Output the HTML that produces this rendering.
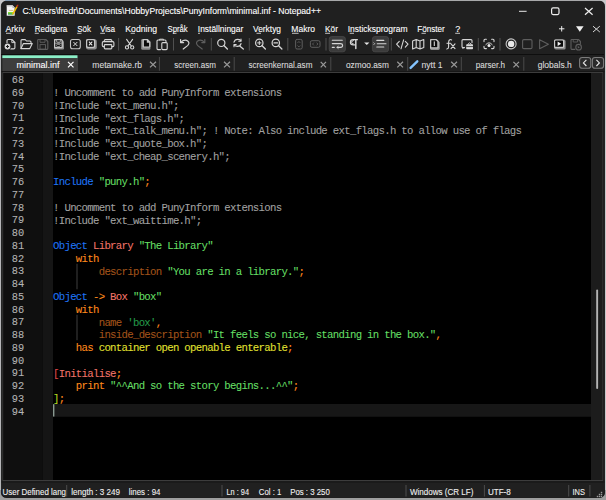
<!DOCTYPE html>
<html><head><meta charset="utf-8"><title>Notepad++</title>
<style>html,body{margin:0;padding:0;width:606px;height:500px;overflow:hidden;background:#d9dde3;font-family:"Liberation Sans",sans-serif}svg{display:block}</style>
</head><body>
<svg width="606" height="500" viewBox="0 0 606 500" shape-rendering="auto"><rect x="0" y="0" width="606" height="500" fill="#c6c7c9"/>
<rect x="0" y="490" width="606" height="10" fill="#9e9e9e"/>
<rect x="5" y="0" width="11" height="1.3" fill="#9db4cc"/>
<rect x="1.4" y="1.3" width="603.1" height="496.2" rx="4.5" ry="4.5" fill="#202020" stroke="#0e0e0e" stroke-width="0.8"/>
<g><path d="M6.7 5.2 H12.6 L14.7 7.6 V15.8 H6.7 Z" fill="#f6f6f6"/><rect x="6.7" y="5.2" width="6" height="1.3" fill="#c8c8c8"/><path d="M12.4 5.2 V8 H14.7" fill="#b8b8b8"/><rect x="8.8" y="9.9" width="4.4" height="1.1" fill="#d8c890"/><rect x="8" y="12" width="5.6" height="1.3" fill="#88e030"/><rect x="8" y="13.3" width="5.6" height="1.3" fill="#259a25"/><path d="M11.8 14.8 L12.4 13.2 L16.2 6.2 L17.6 7 L13.8 14 Z" fill="#f2b800"/><path d="M16.2 6.2 L16.9 5 L18.2 4.5 L18.3 5.9 L17.6 7 Z" fill="#c83018"/></g>
<text x="22.4" y="14.4" font-family="Liberation Sans" font-size="9.6" fill="#ffffff" textLength="298.6" lengthAdjust="spacingAndGlyphs" stroke="#ffffff" stroke-width="0.12">C:\Users\fredr\Documents\HobbyProjects\PunyInform\minimal.inf - Notepad++</text>
<rect x="519" y="10.8" width="7.6" height="1" fill="#e8e8e8"/>
<rect x="551.6" y="7.9" width="7.4" height="6.7" rx="1.5" fill="none" stroke="#eeeeee" stroke-width="1.2"/>
<path d="M585 8 L592.6 14.8 M592.6 8 L585 14.8" stroke="#eeeeee" stroke-width="1.2"/>
<text x="5.4" y="31.9" font-family="Liberation Sans" font-size="9" fill="#ffffff" textLength="19.4" lengthAdjust="spacingAndGlyphs" stroke="#ffffff" stroke-width="0.1">Arkiv</text>
<text x="34.7" y="31.9" font-family="Liberation Sans" font-size="9" fill="#ffffff" textLength="32.6" lengthAdjust="spacingAndGlyphs" stroke="#ffffff" stroke-width="0.1">Redigera</text>
<text x="77.2" y="31.9" font-family="Liberation Sans" font-size="9" fill="#ffffff" textLength="13.8" lengthAdjust="spacingAndGlyphs" stroke="#ffffff" stroke-width="0.1">Sök</text>
<text x="100.2" y="31.9" font-family="Liberation Sans" font-size="9" fill="#ffffff" textLength="14.8" lengthAdjust="spacingAndGlyphs" stroke="#ffffff" stroke-width="0.1">Visa</text>
<text x="125.3" y="31.9" font-family="Liberation Sans" font-size="9" fill="#ffffff" textLength="31.8" lengthAdjust="spacingAndGlyphs" stroke="#ffffff" stroke-width="0.1">Kodning</text>
<text x="167.5" y="31.9" font-family="Liberation Sans" font-size="9" fill="#ffffff" textLength="20.2" lengthAdjust="spacingAndGlyphs" stroke="#ffffff" stroke-width="0.1">Språk</text>
<text x="197.8" y="31.9" font-family="Liberation Sans" font-size="9" fill="#ffffff" textLength="45.5" lengthAdjust="spacingAndGlyphs" stroke="#ffffff" stroke-width="0.1">Inställningar</text>
<text x="253" y="31.9" font-family="Liberation Sans" font-size="9" fill="#ffffff" textLength="28" lengthAdjust="spacingAndGlyphs" stroke="#ffffff" stroke-width="0.1">Verktyg</text>
<text x="291.3" y="31.9" font-family="Liberation Sans" font-size="9" fill="#ffffff" textLength="23.7" lengthAdjust="spacingAndGlyphs" stroke="#ffffff" stroke-width="0.1">Makro</text>
<text x="325.1" y="31.9" font-family="Liberation Sans" font-size="9" fill="#ffffff" textLength="12.8" lengthAdjust="spacingAndGlyphs" stroke="#ffffff" stroke-width="0.1">Kör</text>
<text x="347.7" y="31.9" font-family="Liberation Sans" font-size="9" fill="#ffffff" textLength="60.0" lengthAdjust="spacingAndGlyphs" stroke="#ffffff" stroke-width="0.1">Insticksprogram</text>
<text x="417.2" y="31.9" font-family="Liberation Sans" font-size="9" fill="#ffffff" textLength="27.6" lengthAdjust="spacingAndGlyphs" stroke="#ffffff" stroke-width="0.1">Fönster</text>
<text x="455.2" y="31.9" font-family="Liberation Sans" font-size="9" fill="#ffffff" textLength="5.0" lengthAdjust="spacingAndGlyphs" stroke="#ffffff" stroke-width="0.1">?</text>
<rect x="6" y="32.8" width="5.3" height="0.9" fill="#d8d8d8"/>
<rect x="34.7" y="32.8" width="4.1" height="0.9" fill="#d8d8d8"/>
<rect x="77.2" y="32.8" width="4.3" height="0.9" fill="#d8d8d8"/>
<rect x="100.2" y="32.8" width="4.8" height="0.9" fill="#d8d8d8"/>
<rect x="130.7" y="32.8" width="4.2" height="0.9" fill="#d8d8d8"/>
<rect x="172.8" y="32.8" width="3.7" height="0.9" fill="#d8d8d8"/>
<rect x="198" y="32.8" width="2" height="0.9" fill="#d8d8d8"/>
<rect x="256.5" y="32.8" width="4.5" height="0.9" fill="#d8d8d8"/>
<rect x="292" y="32.8" width="6.6" height="0.9" fill="#d8d8d8"/>
<rect x="325.1" y="32.8" width="4.9" height="0.9" fill="#d8d8d8"/>
<rect x="349.7" y="32.8" width="4.3" height="0.9" fill="#d8d8d8"/>
<rect x="421.5" y="32.8" width="4.3" height="0.9" fill="#d8d8d8"/>
<rect x="455.2" y="32.8" width="4.8" height="0.9" fill="#d8d8d8"/>
<path d="M559 28.8 H564.4 M561.7 26.1 V31.5" stroke="#f0f0f0" stroke-width="1"/>
<path d="M576 26.3 H583.6 L579.8 31.8 Z" fill="#f0f0f0"/>
<path d="M593 26.2 L599.8 32 M599.8 26.2 L593 32" stroke="#d8d8d8" stroke-width="1"/>
<rect x="1" y="54" width="603" height="1" fill="#0e0e0e"/>
<rect x="2.3" y="55.3" width="75.2" height="3" fill="#8cf0c8"/>
<rect x="2.3" y="58.3" width="75.2" height="12.7" fill="#3d3d3d"/>
<rect x="76.8" y="58.3" width="0.8" height="12.7" fill="#4c4c4c"/>
<rect x="1.5" y="71" width="603" height="1" fill="#161616"/>
<text x="16.5" y="68.45" font-family="Liberation Sans" font-size="9" fill="#ffffff" textLength="43.0" lengthAdjust="spacingAndGlyphs" stroke="#ffffff" stroke-width="0.1">minimal.inf</text>
<path d="M68 61.8 L73.5 67.4 M73.5 61.8 L68 67.4" stroke="#ffffff" stroke-width="1.2"/>
<text x="92.3" y="68.45" font-family="Liberation Sans" font-size="9" fill="#dadada" textLength="49.7" lengthAdjust="spacingAndGlyphs" stroke="#dadada" stroke-width="0.1">metamake.rb</text>
<path d="M150 61.8 L156 67.4 M156 61.8 L150 67.4" stroke="#9a9a9a" stroke-width="1.2"/>
<rect x="158.9" y="57" width="1" height="13.7" fill="#4a4a4a"/>
<text x="174.3" y="68.45" font-family="Liberation Sans" font-size="9" fill="#dadada" textLength="41.6" lengthAdjust="spacingAndGlyphs" stroke="#dadada" stroke-width="0.1">screen.asm</text>
<path d="M224 61.8 L230 67.4 M230 61.8 L224 67.4" stroke="#9a9a9a" stroke-width="1.2"/>
<rect x="233.7" y="57" width="1" height="13.7" fill="#4a4a4a"/>
<text x="248.5" y="68.45" font-family="Liberation Sans" font-size="9" fill="#dadada" textLength="63.9" lengthAdjust="spacingAndGlyphs" stroke="#dadada" stroke-width="0.1">screenkernal.asm</text>
<path d="M320.7 61.8 L326 67.4 M326 61.8 L320.7 67.4" stroke="#9a9a9a" stroke-width="1.2"/>
<rect x="330.3" y="57" width="1" height="13.7" fill="#4a4a4a"/>
<text x="346" y="68.45" font-family="Liberation Sans" font-size="9" fill="#dadada" textLength="42.9" lengthAdjust="spacingAndGlyphs" stroke="#dadada" stroke-width="0.1">ozmoo.asm</text>
<path d="M397.3 61.8 L403 67.4 M403 61.8 L397.3 67.4" stroke="#9a9a9a" stroke-width="1.2"/>
<rect x="407.2" y="57" width="1" height="13.7" fill="#4a4a4a"/>
<text x="421.5" y="68.45" font-family="Liberation Sans" font-size="9" fill="#dadada" textLength="21.1" lengthAdjust="spacingAndGlyphs" stroke="#dadada" stroke-width="0.1">nytt 1</text>
<path d="M451.2 61.8 L457 67.4 M457 61.8 L451.2 67.4" stroke="#9a9a9a" stroke-width="1.2"/>
<rect x="460.8" y="57" width="1" height="13.7" fill="#4a4a4a"/>
<text x="475.8" y="68.45" font-family="Liberation Sans" font-size="9" fill="#dadada" textLength="29.2" lengthAdjust="spacingAndGlyphs" stroke="#dadada" stroke-width="0.1">parser.h</text>
<path d="M513.4 61.8 L519 67.4 M519 61.8 L513.4 67.4" stroke="#9a9a9a" stroke-width="1.2"/>
<rect x="523.3" y="57" width="1" height="13.7" fill="#4a4a4a"/>
<text x="537.7" y="68.45" font-family="Liberation Sans" font-size="9" fill="#dadada" textLength="34.1" lengthAdjust="spacingAndGlyphs" stroke="#dadada" stroke-width="0.1">globals.h</text>
<path d="M410.6 67.9 L417.3 61.3" stroke="#84c4ff" stroke-width="2.4" stroke-linecap="round"/>
<rect x="579.6" y="57.5" width="11.2" height="10.8" rx="2.6" fill="#2b2b2b" stroke="#7c7c7c" stroke-width="1.1"/>
<rect x="592.4" y="57.5" width="11.2" height="10.8" rx="2.6" fill="#2b2b2b" stroke="#7c7c7c" stroke-width="1.1"/>
<path d="M586.4 59.8 L583.4 62.9 L586.4 66" fill="none" stroke="#e8e8e8" stroke-width="1.1"/>
<path d="M596.4 59.8 L599.4 62.9 L596.4 66" fill="none" stroke="#e8e8e8" stroke-width="1.1"/>
<rect x="2.5" y="72" width="600.5" height="409" fill="#3c3c3c"/>
<rect x="3.5" y="73" width="598.5" height="407" fill="#000000"/>
<rect x="3.5" y="73" width="39" height="407" fill="#0f0f0f"/>
<rect x="42.5" y="73" width="10.5" height="407" fill="#151515"/>
<rect x="591" y="73" width="11.5" height="407" fill="#1c1c1c"/><rect x="596.2" y="289.5" width="1.9" height="99.4" rx="0.95" fill="#b4b4b4"/>
<rect x="53" y="404.0" width="538" height="12.75" fill="#171717"/>
<rect x="53" y="404.2" width="1.4" height="12.35" fill="#8a9a92"/>
<rect x="76.5" y="263.75" width="1" height="25.5" fill="#3e3e3e"/>
<rect x="76.5" y="314.75" width="1" height="25.5" fill="#3e3e3e"/>
<text x="24.1" y="83.05" font-family="Liberation Mono" font-size="11.4" fill="#b4b4b4" textLength="12.4" lengthAdjust="spacingAndGlyphs" text-anchor="end" stroke="#b4b4b4" stroke-width="0.1">68</text>
<text x="24.1" y="95.8" font-family="Liberation Mono" font-size="11.4" fill="#b4b4b4" textLength="12.4" lengthAdjust="spacingAndGlyphs" text-anchor="end" stroke="#b4b4b4" stroke-width="0.1">69</text>
<text x="53.00 58.71 64.42 70.13 75.84 81.55 87.26 92.97 98.68 104.39 110.10 115.81 121.52 127.23 132.94 138.65 144.36 150.07 155.78 161.49 167.20 172.91 178.62 184.33 190.04 195.75 201.46 207.17 212.88 218.59 224.30 230.01 235.72 241.43 247.14 252.85 258.56 264.27 269.98 275.69" y="96.00" font-family="Liberation Mono" font-size="10.7" fill="#a0a0a0" stroke="#a0a0a0" stroke-width="0.08" xml:space="preserve">! Uncomment to add PunyInform extensions</text>
<text x="24.1" y="108.55" font-family="Liberation Mono" font-size="11.4" fill="#b4b4b4" textLength="12.4" lengthAdjust="spacingAndGlyphs" text-anchor="end" stroke="#b4b4b4" stroke-width="0.1">70</text>
<text x="53.00 58.71 64.42 70.13 75.84 81.55 87.26 92.97 98.68 104.39 110.10 115.81 121.52 127.23 132.94 138.65 144.36 150.07 155.78 161.49 167.20 172.91" y="108.75" font-family="Liberation Mono" font-size="10.7" fill="#a0a0a0" stroke="#a0a0a0" stroke-width="0.08" xml:space="preserve">!Include &quot;ext_menu.h&quot;;</text>
<text x="24.1" y="121.3" font-family="Liberation Mono" font-size="11.4" fill="#b4b4b4" textLength="12.4" lengthAdjust="spacingAndGlyphs" text-anchor="end" stroke="#b4b4b4" stroke-width="0.1">71</text>
<text x="53.00 58.71 64.42 70.13 75.84 81.55 87.26 92.97 98.68 104.39 110.10 115.81 121.52 127.23 132.94 138.65 144.36 150.07 155.78 161.49 167.20 172.91 178.62" y="121.50" font-family="Liberation Mono" font-size="10.7" fill="#a0a0a0" stroke="#a0a0a0" stroke-width="0.08" xml:space="preserve">!Include &quot;ext_flags.h&quot;;</text>
<text x="24.1" y="134.05" font-family="Liberation Mono" font-size="11.4" fill="#b4b4b4" textLength="12.4" lengthAdjust="spacingAndGlyphs" text-anchor="end" stroke="#b4b4b4" stroke-width="0.1">72</text>
<text x="53.00 58.71 64.42 70.13 75.84 81.55 87.26 92.97 98.68 104.39 110.10 115.81 121.52 127.23 132.94 138.65 144.36 150.07 155.78 161.49 167.20 172.91 178.62 184.33 190.04 195.75 201.46 207.17 212.88 218.59 224.30 230.01 235.72 241.43 247.14 252.85 258.56 264.27 269.98 275.69 281.40 287.11 292.82 298.53 304.24 309.95 315.66 321.37 327.08 332.79 338.50 344.21 349.92 355.63 361.34 367.05 372.76 378.47 384.18 389.89 395.60 401.31 407.02 412.73 418.44 424.15 429.86 435.57 441.28 446.99 452.70 458.41 464.12 469.83 475.54 481.25 486.96 492.67 498.38 504.09 509.80 515.51" y="134.25" font-family="Liberation Mono" font-size="10.7" fill="#a0a0a0" stroke="#a0a0a0" stroke-width="0.08" xml:space="preserve">!Include &quot;ext_talk_menu.h&quot;; ! Note: Also include ext_flags.h to allow use of flags</text>
<text x="24.1" y="146.8" font-family="Liberation Mono" font-size="11.4" fill="#b4b4b4" textLength="12.4" lengthAdjust="spacingAndGlyphs" text-anchor="end" stroke="#b4b4b4" stroke-width="0.1">73</text>
<text x="53.00 58.71 64.42 70.13 75.84 81.55 87.26 92.97 98.68 104.39 110.10 115.81 121.52 127.23 132.94 138.65 144.36 150.07 155.78 161.49 167.20 172.91 178.62 184.33 190.04 195.75 201.46" y="147.00" font-family="Liberation Mono" font-size="10.7" fill="#a0a0a0" stroke="#a0a0a0" stroke-width="0.08" xml:space="preserve">!Include &quot;ext_quote_box.h&quot;;</text>
<text x="24.1" y="159.55" font-family="Liberation Mono" font-size="11.4" fill="#b4b4b4" textLength="12.4" lengthAdjust="spacingAndGlyphs" text-anchor="end" stroke="#b4b4b4" stroke-width="0.1">74</text>
<text x="53.00 58.71 64.42 70.13 75.84 81.55 87.26 92.97 98.68 104.39 110.10 115.81 121.52 127.23 132.94 138.65 144.36 150.07 155.78 161.49 167.20 172.91 178.62 184.33 190.04 195.75 201.46 207.17 212.88 218.59 224.30" y="159.75" font-family="Liberation Mono" font-size="10.7" fill="#a0a0a0" stroke="#a0a0a0" stroke-width="0.08" xml:space="preserve">!Include &quot;ext_cheap_scenery.h&quot;;</text>
<text x="24.1" y="172.3" font-family="Liberation Mono" font-size="11.4" fill="#b4b4b4" textLength="12.4" lengthAdjust="spacingAndGlyphs" text-anchor="end" stroke="#b4b4b4" stroke-width="0.1">75</text>
<text x="24.1" y="185.05" font-family="Liberation Mono" font-size="11.4" fill="#b4b4b4" textLength="12.4" lengthAdjust="spacingAndGlyphs" text-anchor="end" stroke="#b4b4b4" stroke-width="0.1">76</text>
<text x="53.00 58.71 64.42 70.13 75.84 81.55 87.26" y="185.25" font-family="Liberation Mono" font-size="10.7" fill="#1f74f4" stroke="#1f74f4" stroke-width="0.08" xml:space="preserve">Include</text>
<text x="98.68 104.39 110.10 115.81 121.52 127.23 132.94 138.65" y="185.25" font-family="Liberation Mono" font-size="10.7" fill="#64de64" stroke="#64de64" stroke-width="0.08" xml:space="preserve">&quot;puny.h&quot;</text>
<text x="144.36" y="185.25" font-family="Liberation Mono" font-size="10.7" fill="#ff8a1c" stroke="#ff8a1c" stroke-width="0.08" xml:space="preserve">;</text>
<text x="24.1" y="197.8" font-family="Liberation Mono" font-size="11.4" fill="#b4b4b4" textLength="12.4" lengthAdjust="spacingAndGlyphs" text-anchor="end" stroke="#b4b4b4" stroke-width="0.1">77</text>
<text x="24.1" y="210.55" font-family="Liberation Mono" font-size="11.4" fill="#b4b4b4" textLength="12.4" lengthAdjust="spacingAndGlyphs" text-anchor="end" stroke="#b4b4b4" stroke-width="0.1">78</text>
<text x="53.00 58.71 64.42 70.13 75.84 81.55 87.26 92.97 98.68 104.39 110.10 115.81 121.52 127.23 132.94 138.65 144.36 150.07 155.78 161.49 167.20 172.91 178.62 184.33 190.04 195.75 201.46 207.17 212.88 218.59 224.30 230.01 235.72 241.43 247.14 252.85 258.56 264.27 269.98 275.69" y="210.75" font-family="Liberation Mono" font-size="10.7" fill="#a0a0a0" stroke="#a0a0a0" stroke-width="0.08" xml:space="preserve">! Uncomment to add PunyInform extensions</text>
<text x="24.1" y="223.3" font-family="Liberation Mono" font-size="11.4" fill="#b4b4b4" textLength="12.4" lengthAdjust="spacingAndGlyphs" text-anchor="end" stroke="#b4b4b4" stroke-width="0.1">79</text>
<text x="53.00 58.71 64.42 70.13 75.84 81.55 87.26 92.97 98.68 104.39 110.10 115.81 121.52 127.23 132.94 138.65 144.36 150.07 155.78 161.49 167.20 172.91 178.62 184.33 190.04 195.75" y="223.50" font-family="Liberation Mono" font-size="10.7" fill="#a0a0a0" stroke="#a0a0a0" stroke-width="0.08" xml:space="preserve">!Include &quot;ext_waittime.h&quot;;</text>
<text x="24.1" y="236.05" font-family="Liberation Mono" font-size="11.4" fill="#b4b4b4" textLength="12.4" lengthAdjust="spacingAndGlyphs" text-anchor="end" stroke="#b4b4b4" stroke-width="0.1">80</text>
<text x="24.1" y="248.8" font-family="Liberation Mono" font-size="11.4" fill="#b4b4b4" textLength="12.4" lengthAdjust="spacingAndGlyphs" text-anchor="end" stroke="#b4b4b4" stroke-width="0.1">81</text>
<text x="53.00 58.71 64.42 70.13 75.84 81.55" y="249.00" font-family="Liberation Mono" font-size="10.7" fill="#1f74f4" stroke="#1f74f4" stroke-width="0.08" xml:space="preserve">Object</text>
<text x="92.97 98.68 104.39 110.10 115.81 121.52 127.23" y="249.00" font-family="Liberation Mono" font-size="10.7" fill="#f07468" stroke="#f07468" stroke-width="0.08" xml:space="preserve">Library</text>
<text x="138.65 144.36 150.07 155.78 161.49 167.20 172.91 178.62 184.33 190.04 195.75 201.46 207.17" y="249.00" font-family="Liberation Mono" font-size="10.7" fill="#64de64" stroke="#64de64" stroke-width="0.08" xml:space="preserve">&quot;The Library&quot;</text>
<text x="24.1" y="261.55" font-family="Liberation Mono" font-size="11.4" fill="#b4b4b4" textLength="12.4" lengthAdjust="spacingAndGlyphs" text-anchor="end" stroke="#b4b4b4" stroke-width="0.1">82</text>
<text x="75.84 81.55 87.26 92.97" y="261.75" font-family="Liberation Mono" font-size="10.7" fill="#ff8a1c" stroke="#ff8a1c" stroke-width="0.08" xml:space="preserve">with</text>
<text x="24.1" y="274.3" font-family="Liberation Mono" font-size="11.4" fill="#b4b4b4" textLength="12.4" lengthAdjust="spacingAndGlyphs" text-anchor="end" stroke="#b4b4b4" stroke-width="0.1">83</text>
<text x="98.68 104.39 110.10 115.81 121.52 127.23 132.94 138.65 144.36 150.07 155.78" y="274.50" font-family="Liberation Mono" font-size="10.7" fill="#a2531a" stroke="#a2531a" stroke-width="0.08" xml:space="preserve">description</text>
<text x="167.20 172.91 178.62 184.33 190.04 195.75 201.46 207.17 212.88 218.59 224.30 230.01 235.72 241.43 247.14 252.85 258.56 264.27 269.98 275.69 281.40 287.11 292.82" y="274.50" font-family="Liberation Mono" font-size="10.7" fill="#64de64" stroke="#64de64" stroke-width="0.08" xml:space="preserve">&quot;You are in a library.&quot;</text>
<text x="298.53" y="274.50" font-family="Liberation Mono" font-size="10.7" fill="#ff8a1c" stroke="#ff8a1c" stroke-width="0.08" xml:space="preserve">;</text>
<text x="24.1" y="287.05" font-family="Liberation Mono" font-size="11.4" fill="#b4b4b4" textLength="12.4" lengthAdjust="spacingAndGlyphs" text-anchor="end" stroke="#b4b4b4" stroke-width="0.1">84</text>
<text x="24.1" y="299.8" font-family="Liberation Mono" font-size="11.4" fill="#b4b4b4" textLength="12.4" lengthAdjust="spacingAndGlyphs" text-anchor="end" stroke="#b4b4b4" stroke-width="0.1">85</text>
<text x="53.00 58.71 64.42 70.13 75.84 81.55" y="300.00" font-family="Liberation Mono" font-size="10.7" fill="#1f74f4" stroke="#1f74f4" stroke-width="0.08" xml:space="preserve">Object</text>
<text x="92.97 98.68" y="300.00" font-family="Liberation Mono" font-size="10.7" fill="#ff8a1c" stroke="#ff8a1c" stroke-width="0.08" xml:space="preserve">-&gt;</text>
<text x="110.10 115.81 121.52" y="300.00" font-family="Liberation Mono" font-size="10.7" fill="#f07468" stroke="#f07468" stroke-width="0.08" xml:space="preserve">Box</text>
<text x="132.94 138.65 144.36 150.07 155.78" y="300.00" font-family="Liberation Mono" font-size="10.7" fill="#64de64" stroke="#64de64" stroke-width="0.08" xml:space="preserve">&quot;box&quot;</text>
<text x="24.1" y="312.55" font-family="Liberation Mono" font-size="11.4" fill="#b4b4b4" textLength="12.4" lengthAdjust="spacingAndGlyphs" text-anchor="end" stroke="#b4b4b4" stroke-width="0.1">86</text>
<text x="75.84 81.55 87.26 92.97" y="312.75" font-family="Liberation Mono" font-size="10.7" fill="#ff8a1c" stroke="#ff8a1c" stroke-width="0.08" xml:space="preserve">with</text>
<text x="24.1" y="325.3" font-family="Liberation Mono" font-size="11.4" fill="#b4b4b4" textLength="12.4" lengthAdjust="spacingAndGlyphs" text-anchor="end" stroke="#b4b4b4" stroke-width="0.1">87</text>
<text x="98.68 104.39 110.10 115.81" y="325.50" font-family="Liberation Mono" font-size="10.7" fill="#a2531a" stroke="#a2531a" stroke-width="0.08" xml:space="preserve">name</text>
<text x="127.23 132.94 138.65 144.36 150.07" y="325.50" font-family="Liberation Mono" font-size="10.7" fill="#249a4a" stroke="#249a4a" stroke-width="0.08" xml:space="preserve">&#x27;box&#x27;</text>
<text x="155.78" y="325.50" font-family="Liberation Mono" font-size="10.7" fill="#ff8a1c" stroke="#ff8a1c" stroke-width="0.08" xml:space="preserve">,</text>
<text x="24.1" y="338.05" font-family="Liberation Mono" font-size="11.4" fill="#b4b4b4" textLength="12.4" lengthAdjust="spacingAndGlyphs" text-anchor="end" stroke="#b4b4b4" stroke-width="0.1">88</text>
<text x="98.68 104.39 110.10 115.81 121.52 127.23 132.94 138.65 144.36 150.07 155.78 161.49 167.20 172.91 178.62 184.33 190.04 195.75" y="338.25" font-family="Liberation Mono" font-size="10.7" fill="#a2531a" stroke="#a2531a" stroke-width="0.08" xml:space="preserve">inside_description</text>
<text x="207.17 212.88 218.59 224.30 230.01 235.72 241.43 247.14 252.85 258.56 264.27 269.98 275.69 281.40 287.11 292.82 298.53 304.24 309.95 315.66 321.37 327.08 332.79 338.50 344.21 349.92 355.63 361.34 367.05 372.76 378.47 384.18 389.89 395.60 401.31 407.02 412.73 418.44 424.15 429.86" y="338.25" font-family="Liberation Mono" font-size="10.7" fill="#64de64" stroke="#64de64" stroke-width="0.08" xml:space="preserve">&quot;It feels so nice, standing in the box.&quot;</text>
<text x="435.57" y="338.25" font-family="Liberation Mono" font-size="10.7" fill="#ff8a1c" stroke="#ff8a1c" stroke-width="0.08" xml:space="preserve">,</text>
<text x="24.1" y="350.8" font-family="Liberation Mono" font-size="11.4" fill="#b4b4b4" textLength="12.4" lengthAdjust="spacingAndGlyphs" text-anchor="end" stroke="#b4b4b4" stroke-width="0.1">89</text>
<text x="75.84 81.55 87.26" y="351.00" font-family="Liberation Mono" font-size="10.7" fill="#ff8a1c" stroke="#ff8a1c" stroke-width="0.08" xml:space="preserve">has</text>
<text x="98.68 104.39 110.10 115.81 121.52 127.23 132.94 138.65 144.36 150.07 155.78 161.49 167.20 172.91 178.62 184.33 190.04 195.75 201.46 207.17 212.88 218.59 224.30 230.01 235.72 241.43 247.14 252.85 258.56 264.27 269.98 275.69 281.40" y="351.00" font-family="Liberation Mono" font-size="10.7" fill="#e0e030" stroke="#e0e030" stroke-width="0.08" xml:space="preserve">container open openable enterable</text>
<text x="287.11" y="351.00" font-family="Liberation Mono" font-size="10.7" fill="#ff8a1c" stroke="#ff8a1c" stroke-width="0.08" xml:space="preserve">;</text>
<text x="24.1" y="363.55" font-family="Liberation Mono" font-size="11.4" fill="#b4b4b4" textLength="12.4" lengthAdjust="spacingAndGlyphs" text-anchor="end" stroke="#b4b4b4" stroke-width="0.1">90</text>
<text x="24.1" y="376.3" font-family="Liberation Mono" font-size="11.4" fill="#b4b4b4" textLength="12.4" lengthAdjust="spacingAndGlyphs" text-anchor="end" stroke="#b4b4b4" stroke-width="0.1">91</text>
<text x="53.00" y="376.50" font-family="Liberation Mono" font-size="10.7" fill="#e04848" stroke="#e04848" stroke-width="0.08" xml:space="preserve">[</text>
<text x="58.71 64.42 70.13 75.84 81.55 87.26 92.97 98.68 104.39 110.10" y="376.50" font-family="Liberation Mono" font-size="10.7" fill="#f07468" stroke="#f07468" stroke-width="0.08" xml:space="preserve">Initialise</text>
<text x="115.81" y="376.50" font-family="Liberation Mono" font-size="10.7" fill="#ff8a1c" stroke="#ff8a1c" stroke-width="0.08" xml:space="preserve">;</text>
<text x="24.1" y="389.05" font-family="Liberation Mono" font-size="11.4" fill="#b4b4b4" textLength="12.4" lengthAdjust="spacingAndGlyphs" text-anchor="end" stroke="#b4b4b4" stroke-width="0.1">92</text>
<text x="75.84 81.55 87.26 92.97 98.68" y="389.25" font-family="Liberation Mono" font-size="10.7" fill="#ff8a1c" stroke="#ff8a1c" stroke-width="0.08" xml:space="preserve">print</text>
<text x="110.10 115.81 121.52 127.23 132.94 138.65 144.36 150.07 155.78 161.49 167.20 172.91 178.62 184.33 190.04 195.75 201.46 207.17 212.88 218.59 224.30 230.01 235.72 241.43 247.14 252.85 258.56 264.27 269.98 275.69 281.40 287.11" y="389.25" font-family="Liberation Mono" font-size="10.7" fill="#64de64" stroke="#64de64" stroke-width="0.08" xml:space="preserve">&quot;^^And so the story begins...^^&quot;</text>
<text x="292.82" y="389.25" font-family="Liberation Mono" font-size="10.7" fill="#ff8a1c" stroke="#ff8a1c" stroke-width="0.08" xml:space="preserve">;</text>
<text x="24.1" y="401.8" font-family="Liberation Mono" font-size="11.4" fill="#b4b4b4" textLength="12.4" lengthAdjust="spacingAndGlyphs" text-anchor="end" stroke="#b4b4b4" stroke-width="0.1">93</text>
<text x="53.00" y="402.00" font-family="Liberation Mono" font-size="10.7" fill="#b8d820" stroke="#b8d820" stroke-width="0.08" xml:space="preserve">]</text>
<text x="58.71" y="402.00" font-family="Liberation Mono" font-size="10.7" fill="#ff8a1c" stroke="#ff8a1c" stroke-width="0.08" xml:space="preserve">;</text>
<text x="24.1" y="414.55" font-family="Liberation Mono" font-size="11.4" fill="#b4b4b4" textLength="12.4" lengthAdjust="spacingAndGlyphs" text-anchor="end" stroke="#b4b4b4" stroke-width="0.1">94</text>
<rect x="1.5" y="481.5" width="603" height="1" fill="#151515"/>
<text x="2.6" y="494.6" font-family="Liberation Sans" font-size="9" fill="#f0f0f0" textLength="63.4" lengthAdjust="spacingAndGlyphs" stroke="#f0f0f0" stroke-width="0.1">User Defined lang</text>
<text x="71.2" y="494.6" font-family="Liberation Sans" font-size="9" fill="#f0f0f0" textLength="48.8" lengthAdjust="spacingAndGlyphs" stroke="#f0f0f0" stroke-width="0.1">length : 3 249</text>
<text x="128.8" y="494.6" font-family="Liberation Sans" font-size="9" fill="#f0f0f0" textLength="31.7" lengthAdjust="spacingAndGlyphs" stroke="#f0f0f0" stroke-width="0.1">lines : 94</text>
<text x="226.5" y="494.6" font-family="Liberation Sans" font-size="9" fill="#f0f0f0" textLength="22.5" lengthAdjust="spacingAndGlyphs" stroke="#f0f0f0" stroke-width="0.1">Ln : 94</text>
<text x="258.8" y="494.6" font-family="Liberation Sans" font-size="9" fill="#f0f0f0" textLength="22.5" lengthAdjust="spacingAndGlyphs" stroke="#f0f0f0" stroke-width="0.1">Col : 1</text>
<text x="290.2" y="494.6" font-family="Liberation Sans" font-size="9" fill="#f0f0f0" textLength="39.6" lengthAdjust="spacingAndGlyphs" stroke="#f0f0f0" stroke-width="0.1">Pos : 3 250</text>
<text x="409.9" y="494.6" font-family="Liberation Sans" font-size="9" fill="#f0f0f0" textLength="63.5" lengthAdjust="spacingAndGlyphs" stroke="#f0f0f0" stroke-width="0.1">Windows (CR LF)</text>
<text x="487.9" y="494.6" font-family="Liberation Sans" font-size="9" fill="#f0f0f0" textLength="22.9" lengthAdjust="spacingAndGlyphs" stroke="#f0f0f0" stroke-width="0.1">UTF-8</text>
<text x="572.5" y="494.6" font-family="Liberation Sans" font-size="9" fill="#f0f0f0" textLength="12.5" lengthAdjust="spacingAndGlyphs" stroke="#f0f0f0" stroke-width="0.1">INS</text>
<rect x="66.2" y="485" width="1" height="11.5" fill="#4c4c4c"/>
<rect x="221.5" y="485" width="1" height="11.5" fill="#4c4c4c"/>
<rect x="405.5" y="485" width="1" height="11.5" fill="#4c4c4c"/>
<rect x="483.9" y="485" width="1" height="11.5" fill="#4c4c4c"/>
<rect x="568.2" y="485" width="1" height="11.5" fill="#4c4c4c"/>
<rect x="589.4" y="485" width="1" height="11.5" fill="#4c4c4c"/>
<rect x="600.8" y="491.8" width="1.4" height="1.4" fill="#9a9a9a"/>
<rect x="598.8" y="493.8" width="1.4" height="1.4" fill="#9a9a9a"/>
<rect x="600.8" y="493.8" width="1.4" height="1.4" fill="#9a9a9a"/>
<rect x="596.8" y="495.8" width="1.4" height="1.4" fill="#9a9a9a"/>
<rect x="598.8" y="495.8" width="1.4" height="1.4" fill="#9a9a9a"/>
<rect x="600.8" y="495.8" width="1.4" height="1.4" fill="#9a9a9a"/>
<rect x="118.1" y="38" width="1" height="12.5" fill="#505050"/>
<rect x="173.0" y="38" width="1" height="12.5" fill="#505050"/>
<rect x="210.8" y="38" width="1" height="12.5" fill="#505050"/>
<rect x="248.8" y="38" width="1" height="12.5" fill="#505050"/>
<rect x="287.3" y="38" width="1" height="12.5" fill="#505050"/>
<rect x="325.5" y="38" width="1" height="12.5" fill="#505050"/>
<rect x="390.8" y="38" width="1" height="12.5" fill="#505050"/>
<rect x="477.8" y="38" width="1" height="12.5" fill="#505050"/>
<rect x="499.5" y="38" width="1" height="12.5" fill="#505050"/>
<path d="M7 43.5 V40.6 Q7 39.5 8.1 39.5 H11.9 L14.9 42.5 V47.7 Q14.9 48.9 13.7 48.9 H10.8" fill="none" stroke="#d6d6d6" stroke-width="1.1" stroke-linecap="round" stroke-linejoin="round"/>
<path d="M11.8 39.6 V42.6 H14.8" fill="none" stroke="#d6d6d6" stroke-width="0.9" stroke-linecap="round" stroke-linejoin="round"/>
<circle cx="7.5" cy="46.5" r="3.4" fill="#202020"/>
<circle cx="7.5" cy="46.5" r="2.9" fill="#d6d6d6"/>
<path d="M6 46.5 H9 M7.5 45 V48" stroke="#202020" stroke-width="1"/>
<path d="M21 48.6 V40.6 Q21 39.6 22 39.6 H25.2 L26.5 41 H30 Q31 41 31 42 V43.2" fill="none" stroke="#d6d6d6" stroke-width="1.1" stroke-linecap="round" stroke-linejoin="round"/>
<path d="M21 48.6 L23.4 43.6 H32.3 L29.8 48.6 Z" fill="none" stroke="#d6d6d6" stroke-width="1.1" stroke-linecap="round" stroke-linejoin="round"/>
<path d="M37.7 40.3 Q37.7 39.5 38.5 39.5 H45.8 L47.8 41.5 V48.6 Q47.8 49.4 47 49.4 H38.5 Q37.7 49.4 37.7 48.6 Z" fill="none" stroke="#5e5e5e" stroke-width="1.1" stroke-linecap="round" stroke-linejoin="round"/>
<path d="M40 39.6 V42.3 H45 V39.6" fill="none" stroke="#5e5e5e" stroke-width="0.9" stroke-linecap="round" stroke-linejoin="round"/>
<rect x="40" y="44.6" width="5.5" height="4.6" fill="none" stroke="#5e5e5e" stroke-width="0.9"/>
<path d="M54.6 39 H61.6 L64 41.4 V48.4 Q64 49.5 62.9 49.5 H55.1 Q54 49.5 54 48.4 V39.6 Q54 39 54.6 39 Z" fill="#8c8c8c"/>
<path d="M54 39.6 Q54 39 54.6 39 H61.6 L62.8 40.2 V47.2 Q62.8 48.3 61.7 48.3 H55.1 Q54 48.3 54 47.2 Z" fill="#c4c4c4"/>
<rect x="55.3" y="40.2" width="6.2" height="6.9" rx="0.6" fill="#101010"/>
<path d="M56.6 40.2 V41.2 Q56.6 42.2 57.6 42.2 H59.4 Q60.4 42.2 60.4 41.2 V40.2" fill="none" stroke="#c4c4c4" stroke-width="0.9"/>
<path d="M55.3 43.2 H61.5" stroke="#c4c4c4" stroke-width="0.9"/>
<rect x="56.6" y="44.4" width="3.6" height="2.2" rx="0.9" fill="none" stroke="#b0b0b0" stroke-width="0.8"/>
<rect x="70.5" y="39.5" width="9.8" height="9.3" rx="2" fill="none" stroke="#c4c4c4" stroke-width="1.1"/>
<path d="M73.4 42 L77.3 46 M77.3 42 L73.4 46" stroke="#d8d8d8" stroke-width="1"/>
<path d="M87.6 39 H94 Q96.8 39 96.8 41.8 V47.5 Q96.8 49.5 94.8 49.5 H88.2 Q86 49.5 86 47.3 V40.6 Q86 39 87.6 39 Z" fill="#8c8c8c"/>
<rect x="86" y="39" width="9.2" height="9" rx="1.8" fill="#c4c4c4"/>
<rect x="87.3" y="40.3" width="6.6" height="6.4" rx="0.8" fill="#0a0a0a"/>
<path d="M88.9 41.6 L92.3 45.4 M92.3 41.6 L88.9 45.4" stroke="#e4e4e4" stroke-width="1.1"/>
<path d="M104.3 41.6 V40.6 Q104.3 39.6 105.3 39.6 H110.8 Q111.8 39.6 111.8 40.6 V41.6" fill="none" stroke="#d6d6d6" stroke-width="1.1" stroke-linecap="round" stroke-linejoin="round"/>
<path d="M104.3 46.6 H103.4 Q102.3 46.6 102.3 45.5 V42.7 Q102.3 41.6 103.4 41.6 H112.8 Q113.9 41.6 113.9 42.7 V45.5 Q113.9 46.6 112.8 46.6 H111.8" fill="none" stroke="#d6d6d6" stroke-width="1.1" stroke-linecap="round" stroke-linejoin="round"/>
<rect x="104.3" y="44.6" width="7.5" height="4.3" rx="0.8" fill="none" stroke="#d6d6d6" stroke-width="1.1"/>
<path d="M126.6 39.4 L131.3 46 M132.6 39.4 L127.9 46" fill="none" stroke="#d6d6d6" stroke-width="1.1" stroke-linecap="round" stroke-linejoin="round"/>
<circle cx="127" cy="47.4" r="1.6" fill="none" stroke="#d6d6d6" stroke-width="1.1" stroke-linecap="round" stroke-linejoin="round"/>
<circle cx="132.2" cy="47.4" r="1.6" fill="none" stroke="#d6d6d6" stroke-width="1.1" stroke-linecap="round" stroke-linejoin="round"/>
<path d="M142.6 38.9 H147.6 L150.4 41.7 V48.4 Q150.4 49.8 149 49.8 H142.6 Q141.2 49.8 141.2 48.4 V40.3 Q141.2 38.9 142.6 38.9 Z" fill="#8c8c8c"/>
<path d="M143.4 38.9 H147.6 L150.4 41.7 V46.6 Q150.4 47.6 149.4 47.6 H143.4 Q142.6 47.6 142.6 46.8 V39.7 Q142.6 38.9 143.4 38.9 Z" fill="#c8c8c8"/>
<path d="M143.9 40.2 H146.8 V42.8 H149.1 V46.4 H143.9 Z" fill="#0a0a0a"/>
<path d="M160.5 49.6 H158 Q157 49.6 157 48.6 V41 Q157 40 158 40 H165 Q166 40 166 41 V42" fill="none" stroke="#d6d6d6" stroke-width="1.1" stroke-linecap="round" stroke-linejoin="round"/>
<path d="M159.6 40 V39.2 H163.4 V40" fill="none" stroke="#d6d6d6" stroke-width="1" stroke-linecap="round" stroke-linejoin="round"/>
<rect x="161.8" y="42.6" width="5.4" height="7" rx="1" fill="#202020" stroke="#d6d6d6" stroke-width="1.1"/>
<path d="M180.8 42.4 Q184.5 38.8 188 41.2 Q190 43 187.6 45.6 L183.2 49" fill="none" stroke="#d6d6d6" stroke-width="1.2" stroke-linecap="round" stroke-linejoin="round"/>
<path d="M180.6 39.6 V42.6 H183.6" fill="none" stroke="#d6d6d6" stroke-width="1.2" stroke-linecap="round" stroke-linejoin="round"/>
<path d="M204.6 42.4 Q200.9 38.8 197.4 41.2 Q195.4 43 197.8 45.6 L202.2 49" fill="none" stroke="#5e5e5e" stroke-width="1.2" stroke-linecap="round" stroke-linejoin="round"/>
<path d="M204.8 39.6 V42.6 H201.8" fill="none" stroke="#5e5e5e" stroke-width="1.2" stroke-linecap="round" stroke-linejoin="round"/>
<circle cx="221.3" cy="42.9" r="3.6" fill="none" stroke="#d6d6d6" stroke-width="1.2" stroke-linecap="round" stroke-linejoin="round"/>
<path d="M223.9 45.5 L227.4 49" fill="none" stroke="#d6d6d6" stroke-width="1.3" stroke-linecap="round" stroke-linejoin="round"/>
<path d="M234 42.2 Q234.8 39.3 237.6 39.3 Q239.6 39.3 240.8 40.6" fill="none" stroke="#d6d6d6" stroke-width="1.2" stroke-linecap="round" stroke-linejoin="round"/>
<path d="M241 39 V41.2 H238.8" fill="none" stroke="#d6d6d6" stroke-width="1.1" stroke-linecap="round" stroke-linejoin="round"/>
<path d="M241 43.6 Q240.2 46.4 237.4 46.4 Q235.4 46.4 234.2 45.1" fill="none" stroke="#d6d6d6" stroke-width="1.2" stroke-linecap="round" stroke-linejoin="round"/>
<path d="M234 46.7 V44.5 H236.2" fill="none" stroke="#d6d6d6" stroke-width="1.1" stroke-linecap="round" stroke-linejoin="round"/>
<path d="M240 46.2 L243.3 49" fill="none" stroke="#d6d6d6" stroke-width="1.3" stroke-linecap="round" stroke-linejoin="round"/>
<circle cx="259.3" cy="42.9" r="3.7" fill="none" stroke="#d6d6d6" stroke-width="1.2" stroke-linecap="round" stroke-linejoin="round"/>
<path d="M261.9 45.5 L265.4 49" fill="none" stroke="#d6d6d6" stroke-width="1.3" stroke-linecap="round" stroke-linejoin="round"/>
<path d="M257.6 42.9 H261 M259.3 41.2 V44.6" fill="none" stroke="#d6d6d6" stroke-width="1" stroke-linecap="round" stroke-linejoin="round"/>
<circle cx="275.8" cy="42.9" r="3.7" fill="none" stroke="#d6d6d6" stroke-width="1.2" stroke-linecap="round" stroke-linejoin="round"/>
<path d="M278.4 45.5 L281.9 49" fill="none" stroke="#d6d6d6" stroke-width="1.3" stroke-linecap="round" stroke-linejoin="round"/>
<path d="M274 42.9 H277.6" fill="none" stroke="#d6d6d6" stroke-width="1.2" stroke-linecap="round" stroke-linejoin="round"/>
<rect x="295.6" y="39.4" width="6.6" height="9.6" rx="1.5" fill="none" stroke="#5e5e5e" stroke-width="1"/>
<path d="M297.8 42.6 L298.9 41.5 L300 42.6 M297.8 45.8 L298.9 46.9 L300 45.8" fill="none" stroke="#5e5e5e" stroke-width="0.9" stroke-linecap="round" stroke-linejoin="round"/>
<rect x="310.4" y="40.7" width="9.6" height="6.6" rx="1.5" fill="none" stroke="#5e5e5e" stroke-width="1"/>
<path d="M313.6 42.9 L312.5 44 L313.6 45.1 M316.8 42.9 L317.9 44 L316.8 45.1" fill="none" stroke="#5e5e5e" stroke-width="0.9" stroke-linecap="round" stroke-linejoin="round"/>
<rect x="329.2" y="36.6" width="16.2" height="15.2" rx="2.5" fill="#3b3b3b" stroke="#4a4a4a" stroke-width="0.8"/>
<path d="M332.3 40.3 H342.3 M332.3 43.6 H340.2 Q342.6 43.6 342.6 45.5 Q342.6 47.4 340.4 47.4 H337" fill="none" stroke="#d6d6d6" stroke-width="1.1" stroke-linecap="round" stroke-linejoin="round"/>
<path d="M338.2 46.3 L337 47.4 L338.2 48.5" fill="none" stroke="#d6d6d6" stroke-width="0.9" stroke-linecap="round" stroke-linejoin="round"/>
<path d="M332.3 47.4 H334.3" fill="none" stroke="#d6d6d6" stroke-width="1.1" stroke-linecap="round" stroke-linejoin="round"/>
<path d="M357.4 39.7 H353.2 Q350.4 39.7 350.4 42.3 Q350.4 44.9 353.2 44.9 H355.4" fill="none" stroke="#d6d6d6" stroke-width="1.2" stroke-linecap="round" stroke-linejoin="round"/>
<path d="M353.4 40.5 Q351.6 40.8 351.6 42.3 Q351.6 43.9 353.4 44" fill="none" stroke="#d6d6d6" stroke-width="1.0" stroke-linecap="round" stroke-linejoin="round"/>
<path d="M355.8 39.7 V48.6" fill="none" stroke="#d6d6d6" stroke-width="1.5" stroke-linecap="round" stroke-linejoin="round"/>
<path d="M364.2 42.5 H369.4 L366.8 44.9 Z" fill="#e8e8e8"/>
<rect x="372.4" y="36.6" width="16.2" height="15.2" rx="2.5" fill="#3b3b3b" stroke="#4a4a4a" stroke-width="0.8"/>
<path d="M376.8 40.4 H383.8 M377.3 43.7 H386 M376.8 47 H383.8" fill="none" stroke="#d6d6d6" stroke-width="1.1" stroke-linecap="round" stroke-linejoin="round"/>
<path d="M373.8 42.8 L374.7 43.7 L373.8 44.6" fill="none" stroke="#d6d6d6" stroke-width="0.8" stroke-linecap="round" stroke-linejoin="round"/>
<path d="M399.3 41.3 L396.6 44.2 L399.3 47.1 M405.3 41.3 L408 44.2 L405.3 47.1 M403.6 39.8 L401 48.8" fill="none" stroke="#d6d6d6" stroke-width="1.1" stroke-linecap="round" stroke-linejoin="round"/>
<path d="M412.6 41 L416.2 39.6 L420 41 L423.8 39.6 V47.6 L420 49 L416.2 47.6 L412.6 49 Z M416.2 39.6 V47.6 M420 41 V49" fill="none" stroke="#d6d6d6" stroke-width="1.1" stroke-linecap="round" stroke-linejoin="round"/>
<path d="M431.4 38.9 H436.4 L439.8 42.3 V48.6 Q439.8 50 438.4 50 H431.4 Q430 50 430 48.6 V40.3 Q430 38.9 431.4 38.9 Z" fill="#8c8c8c"/>
<path d="M431.2 38.9 H436.4 L438.6 41.1 V47.4 Q438.6 48.6 437.4 48.6 H431.2 Q430 48.6 430 47.4 V40.1 Q430 38.9 431.2 38.9 Z" fill="#c4c4c4"/>
<path d="M431.3 40.2 H435.8 L437.3 41.7 V47.3 H431.3 Z" fill="#0a0a0a"/>
<rect x="433.7" y="41.4" width="1.3" height="4.6" fill="#b8b8b8"/>
<path d="M451.6 40 Q450.4 39.1 449.4 40 Q448.6 40.8 448.6 42.5 V47 Q448.6 48.9 446.8 49" fill="none" stroke="#d6d6d6" stroke-width="1.1" stroke-linecap="round" stroke-linejoin="round"/>
<path d="M446.9 43.3 H450.6" fill="none" stroke="#d6d6d6" stroke-width="1" stroke-linecap="round" stroke-linejoin="round"/>
<path d="M451 43.8 L455 48.6 M455 43.8 L451 48.6" fill="none" stroke="#d6d6d6" stroke-width="1.1" stroke-linecap="round" stroke-linejoin="round"/>
<path d="M464.5 47.6 H463 Q462 47.6 462 46.6 V40.6 Q462 39.6 463 39.6 H471 Q472 39.6 472 40.6 V42.6" fill="none" stroke="#d6d6d6" stroke-width="1.1" stroke-linecap="round" stroke-linejoin="round"/>
<path d="M462.8 48.6 L464.2 47.2" fill="none" stroke="#d6d6d6" stroke-width="1" stroke-linecap="round" stroke-linejoin="round"/>
<rect x="466.2" y="44.2" width="6.8" height="5" rx="0.8" fill="#dcdcdc"/>
<path d="M466.2 46.6 H473" stroke="#202020" stroke-width="0.8"/>
<path d="M467.8 44.2 L469.6 42.8 L471.4 44.2" fill="none" stroke="#d6d6d6" stroke-width="0.9" stroke-linecap="round" stroke-linejoin="round"/>
<path d="M484 41.6 V40.2 Q484 39.2 485 39.2 H486.4 M491.6 39.2 H493 Q494 39.2 494 40.2 V41.6 M494 46.2 V47.6 Q494 48.6 493 48.6 H491.6 M486.4 48.6 H485 Q484 48.6 484 47.6 V46.2" fill="none" stroke="#d6d6d6" stroke-width="1.1" stroke-linecap="round" stroke-linejoin="round"/>
<path d="M485.8 44.6 Q489 40.8 492.2 44.6" fill="none" stroke="#d6d6d6" stroke-width="1" stroke-linecap="round" stroke-linejoin="round"/>
<circle cx="489" cy="45.4" r="1.5" fill="#f0f0f0"/>
<circle cx="511.1" cy="43.9" r="5" fill="none" stroke="#c8c8c8" stroke-width="1.1" stroke-linecap="round" stroke-linejoin="round"/>
<circle cx="511.1" cy="43.9" r="3.2" fill="#e8e8e8"/>
<rect x="522.6" y="39.6" width="9.4" height="9" rx="1.2" fill="none" stroke="#5e5e5e" stroke-width="1.1"/>
<path d="M539.6 39.8 L548.4 44.2 L539.6 48.8 Z" fill="none" stroke="#5e5e5e" stroke-width="1.1" stroke-linecap="round" stroke-linejoin="round"/>
<path d="M555.4 39.4 H563.6 Q565.6 39.4 565.6 41.4 V48.2 Q565.6 49.6 564.2 49.6 H556 Q554 49.6 554 47.6 V40.8 Q554 39.4 555.4 39.4 Z" fill="#8c8c8c"/>
<rect x="554" y="39.4" width="10.2" height="8.6" rx="1.6" fill="#c8c8c8"/>
<rect x="555.2" y="40.6" width="7.8" height="6.2" rx="0.6" fill="#0a0a0a"/>
<path d="M557.6 41.4 L561.2 43.7 L557.6 46 Z" fill="#f4f4f4"/>
<path d="M574.8 49.4 H571.8 Q571 49.4 571 48.6 V40.3 Q571 39.5 571.8 39.5 H578.4 L580.4 41.5 V43.5" fill="none" stroke="#5e5e5e" stroke-width="1.1" stroke-linecap="round" stroke-linejoin="round"/>
<path d="M573.2 39.6 V42 H577.6 V39.6" fill="none" stroke="#5e5e5e" stroke-width="0.9" stroke-linecap="round" stroke-linejoin="round"/>
<circle cx="578.6" cy="47.2" r="2.8" fill="none" stroke="#5e5e5e" stroke-width="1.1" stroke-linecap="round" stroke-linejoin="round"/>
<path d="M577.8 46 L579.8 47.2 L577.8 48.4 Z" fill="#5e5e5e"/></svg>
</body></html>
